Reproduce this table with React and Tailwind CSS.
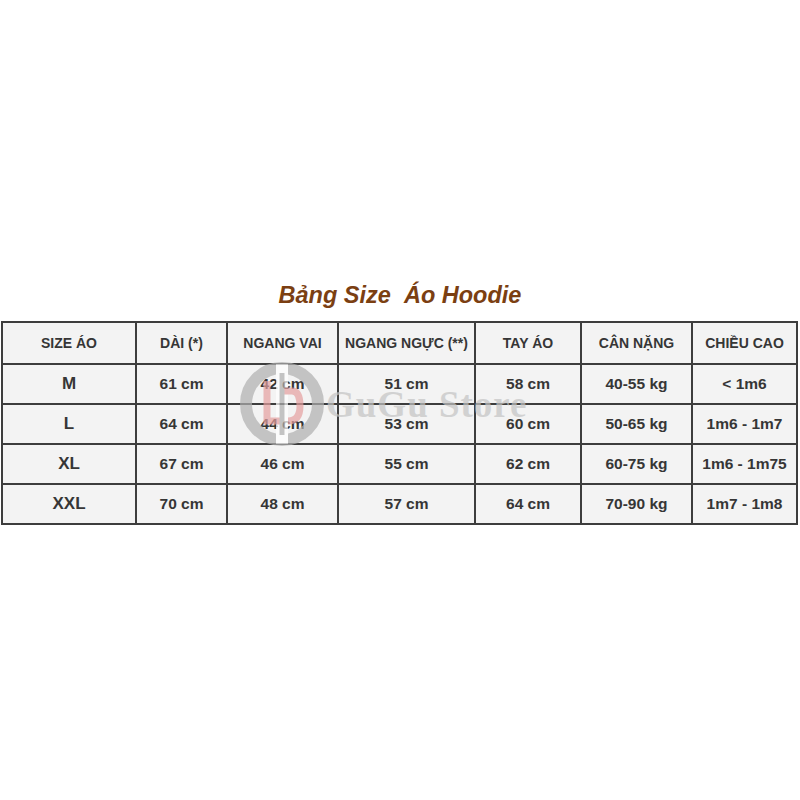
import React from "react";

const cols = [
  { label: "SIZE ÁO", w: "w-[134px]" },
  { label: "DÀI (*)", w: "w-[91px]" },
  { label: "NGANG VAI", w: "w-[111px]" },
  { label: "NGANG NGỰC (**)", w: "w-[137px]" },
  { label: "TAY ÁO", w: "w-[106px]" },
  { label: "CÂN NẶNG", w: "w-[111px]" },
  { label: "CHIỀU CAO", w: "w-[105px]" },
];

const rows = [
  ["M", "61 cm", "42 cm", "51 cm", "58 cm", "40-55 kg", "< 1m6"],
  ["L", "64 cm", "44 cm", "53 cm", "60 cm", "50-65 kg", "1m6 - 1m7"],
  ["XL", "67 cm", "46 cm", "55 cm", "62 cm", "60-75 kg", "1m6 - 1m75"],
  ["XXL", "70 cm", "48 cm", "57 cm", "64 cm", "70-90 kg", "1m7 - 1m8"],
];

// watermark sitting over the table, like in the photo
function Watermark() {
  return (
    <div className="absolute left-[239px] top-[361px] flex items-center gap-[1px] pointer-events-none opacity-70">
      <svg width="86" height="86" viewBox="0 0 86 86">
        <circle cx="43" cy="43" r="36" fill="none" stroke="#b0b0b0" strokeWidth="12" />
        <rect x="37" y="3" width="12" height="80" fill="#ffffff" />
        <path d="M28 20 V60 H43" fill="none" stroke="#e6a0a0" strokeWidth="7" />
        <path d="M43 30 H53 Q61 30 61 45 Q61 60 49 60" fill="none" stroke="#e6a0a0" strokeWidth="7" />
        <path d="M43 12 V74" stroke="#b0b0b0" strokeWidth="5" />
      </svg>
      <span className="font-['Liberation_Serif',serif] font-bold text-[37px] leading-none text-[#c4c4c4] tracking-[1px]">
        GuGu Store
      </span>
    </div>
  );
}

export default function App() {
  return (
    <div className="relative w-[800px] h-[800px] bg-white font-['Liberation_Sans',Arial,sans-serif]">
      <div className="pt-[280px] flex justify-center">
        <h1 className="italic font-bold text-[23.5px] leading-[30px] text-[#7b3f12] whitespace-pre">
          Bảng Size  Áo Hoodie
        </h1>
      </div>
      <div className="pt-[11px] pl-[1px]">
        <table className="border-collapse text-[#363636]">
          <thead>
            <tr className="h-[42px]">
              {cols.map((c) => (
                <th
                  key={c.label}
                  className={`${c.w} border-2 border-[#3d3d3d] bg-[#f3f3f3] text-[14px] font-bold text-center p-0 whitespace-nowrap`}
                >
                  {c.label}
                </th>
              ))}
            </tr>
          </thead>
          <tbody>
            {rows.map((r) => (
              <tr key={r[0]} className="h-[40px]">
                {r.map((v, i) => (
                  <td
                    key={i}
                    className={`border-2 border-[#3d3d3d] bg-[#f3f3f3] font-bold text-center p-0 whitespace-nowrap ${
                      i === 0 ? "text-[17px]" : "text-[15.5px]"
                    }`}
                  >
                    {v}
                  </td>
                ))}
              </tr>
            ))}
          </tbody>
        </table>
      </div>
      <Watermark />
    </div>
  );
}
